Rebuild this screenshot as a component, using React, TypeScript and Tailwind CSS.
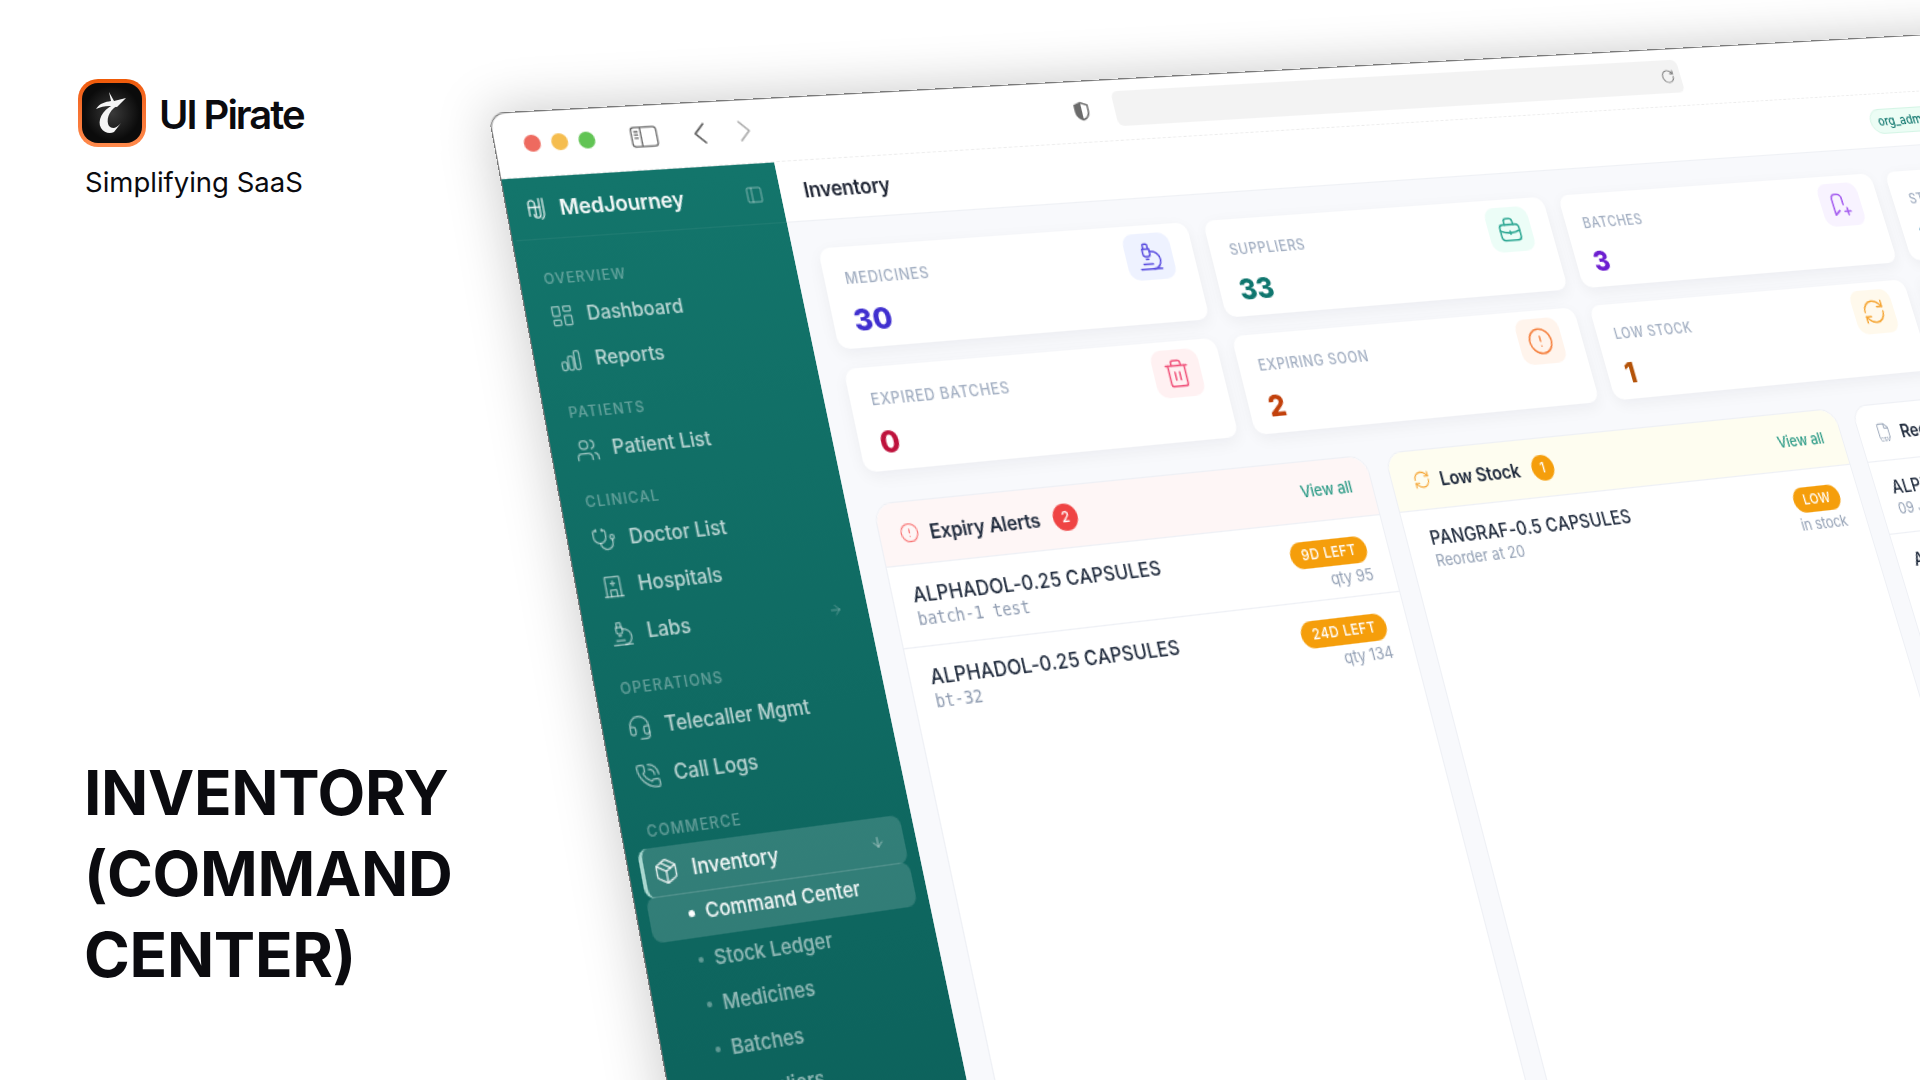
import React from 'react'
import {
	ArrowDown,
	ArrowRight,
	ChevronLeft,
	ChevronRight,
	CircleAlert,
	File,
	Headset,
	LayoutDashboard,
	Microscope,
	Package,
	PanelLeft,
	PhoneCall,
	RefreshCw,
	RotateCw,
	Stethoscope,
	Trash2,
	Users,
} from 'lucide-react'

type IconProps = { className?: string; strokeWidth?: number }

function MedLogo({ className }: IconProps) {
	return (
		<svg viewBox="0 0 24 26" fill="none" stroke="currentColor" strokeWidth="1.7" strokeLinecap="round" className={className}>
			<path d="M4 20V7a3.5 3.5 0 0 1 7 0v13" />
			<path d="M4 11h12" />
			<path d="M16 2v17a3.5 3.5 0 0 1-7 0" />
			<path d="M20 2v17a6 6 0 0 1-3 5" />
		</svg>
	)
}

function BarsIcon({ className }: IconProps) {
	return (
		<svg viewBox="0 0 24 24" fill="none" stroke="currentColor" strokeWidth="1.5" className={className}>
			<rect x="3" y="13" width="5" height="8" rx="2" />
			<rect x="9.5" y="8" width="5" height="13" rx="2" />
			<rect x="16" y="3" width="5" height="18" rx="2" />
		</svg>
	)
}

function BuildingIcon({ className }: IconProps) {
	return (
		<svg viewBox="0 0 24 24" fill="none" stroke="currentColor" strokeWidth="1.5" strokeLinecap="round" className={className}>
			<path d="M5 21V4a1 1 0 0 1 1-1h12a1 1 0 0 1 1 1v17" />
			<path d="M3 21h18" />
			<path d="M12 7v4M10 9h4" />
			<path d="M9 21v-5a1 1 0 0 1 1-1h4a1 1 0 0 1 1 1v5" />
		</svg>
	)
}

function BagIcon({ className }: IconProps) {
	return (
		<svg viewBox="0 0 24 24" fill="none" stroke="currentColor" strokeWidth="1.5" strokeLinecap="round" className={className}>
			<rect x="3" y="8" width="18" height="13" rx="3" />
			<path d="M8 8V5.5A2.5 2.5 0 0 1 10.5 3h3A2.5 2.5 0 0 1 16 5.5V8" />
			<path d="M3 13c5 2.500 13 2.500 18 0" />
			<path d="M12 13.500v2.500" />
		</svg>
	)
}

function BatchIcon({ className }: IconProps) {
	return (
		<svg viewBox="0 0 24 24" fill="none" stroke="currentColor" strokeWidth="1.6" strokeLinecap="round" strokeLinejoin="round" className={className}>
			<path d="M14 12V6.500A4 4 0 0 0 10 3H8a4 4 0 0 0-4 3.500V20.500l5-3.500" />
			<path d="M17 15v6M14 18h6" />
		</svg>
	)
}

function ShieldIcon({ className }: IconProps) {
	return (
		<svg viewBox="0 0 24 24" className={className}>
			<path d="M12 2 4 5v7c0 5 3.500 8.500 8 10 4.500-1.500 8-5 8-10V5z" fill="none" stroke="#6b6b6b" strokeWidth="2" />
			<path d="M12 2 4 5v7c0 5 3.500 8.500 8 10z" fill="#6b6b6b" />
		</svg>
	)
}

function SidebarToggle({ className }: IconProps) {
	return (
		<svg viewBox="0 0 26 20" fill="none" stroke="#666" strokeWidth="1.4" className={className}>
			<rect x="1" y="1" width="24" height="18" rx="3" />
			<path d="M10 1v18" />
			<path d="M3.500 5h4M3.500 8h4M3.500 11h4" />
		</svg>
	)
}

function BrandMark() {
	return (
		<div className="flex h-[68px] w-[68px] items-center justify-center rounded-[20px] bg-linear-to-b from-[#ef5a06] to-[#ff8a4c] p-[4px]">
			<div className="h-full w-full rounded-[16px] bg-[radial-gradient(circle,#3a3a3a_0%,#0b0b0b_65%)]">
				<svg viewBox="0 0 60 60" className="h-full w-full">
					<path d="M27 9 L32 18 L44 15 L35 24 C27 22 21 23 14 26 C18 20 23 19 29 18 Z" fill="#f5f5f5" />
					<path d="M31 22 C20 27 15 38 19 45 C22 50 28 51 32 49 L39 40 C34 46 30 46 27 43 C24 38 26 28 35 23 Z" fill="#f5f5f5" />
				</svg>
			</div>
		</div>
	)
}

const navSections: {
	label: string
	items: { label: string; icon: React.ComponentType<IconProps>; arrow?: boolean }[]
}[] = [
	{
		label: 'Overview',
		items: [
			{ label: 'Dashboard', icon: LayoutDashboard },
			{ label: 'Reports', icon: BarsIcon },
		],
	},
	{ label: 'Patients', items: [{ label: 'Patient List', icon: Users }] },
	{
		label: 'Clinical',
		items: [
			{ label: 'Doctor List', icon: Stethoscope },
			{ label: 'Hospitals', icon: BuildingIcon },
			{ label: 'Labs', icon: Microscope, arrow: true },
		],
	},
	{
		label: 'Operations',
		items: [
			{ label: 'Telecaller Mgmt', icon: Headset },
			{ label: 'Call Logs', icon: PhoneCall },
		],
	},
]

const inventorySubItems = ['Stock Ledger', 'Medicines', 'Batches', 'Suppliers']

function SectionLabel({ children }: { children: React.ReactNode }) {
	return (
		<div className="mb-[5px] h-[15px] pt-[1px] pl-[11px] text-[11.5px] leading-[14px] font-medium tracking-[0.09em] text-white/35 uppercase">
			{children}
		</div>
	)
}

function Sidebar() {
	return (
		<aside className="flex w-[232.5px] shrink-0 flex-col bg-linear-to-b from-[#13756b] to-[#0a5b56] pl-[2.5px] text-white">
			<div className="flex h-[51px] items-center border-b border-white/5 pt-[2px] pr-[15px] pl-[12px]">
				<MedLogo className="h-[20px] w-[18px] text-white/85" />
				<span className="ml-[11px] text-[17.5px] font-semibold tracking-[-0.01em] text-white/95">MedJourney</span>
				<PanelLeft className="ml-auto h-[16px] w-[16px] text-white/45" strokeWidth={1.5} />
			</div>
			<nav className="flex flex-col gap-[14.5px] pt-[24px] pr-[10px] pl-[6px]">
				{navSections.map((section) => (
					<div key={section.label}>
						<SectionLabel>{section.label}</SectionLabel>
						{section.items.map((item) => (
							<div key={item.label} className="flex h-[36px] items-center gap-[11px] pr-[11px] pl-[10px] text-[15.5px] font-medium text-white/70">
								<item.icon className="h-[20px] w-[20px] text-white/55" strokeWidth={1.5} />
								{item.label}
								{item.arrow && <ArrowRight className="ml-auto h-[12px] w-[12px] text-white/30" />}
							</div>
						))}
					</div>
				))}
				<div>
					<SectionLabel>Commerce</SectionLabel>
					<div className="flex h-[36px] items-center gap-[11px] rounded-[8px] border-l-[3px] border-[#a9d8d0] bg-white/15 pr-[16px] pl-[7px] text-[15.5px] font-medium text-white/95">
						<Package className="h-[20px] w-[20px] text-white/85" strokeWidth={1.5} />
						Inventory
						<ArrowDown className="ml-auto h-[12px] w-[12px] text-white/50" />
					</div>
					<div className="mt-[-1px] flex h-[33px] items-center gap-[9px] rounded-[8px] bg-white/15 pb-[3px] pl-[31px] text-[15px] font-medium text-white/95">
						<span className="h-[5px] w-[5px] rounded-full bg-white" />
						Command Center
					</div>
					{inventorySubItems.map((label) => (
						<div key={label} className="flex h-[32px] items-center gap-[9px] pl-[32px] text-[15px] font-medium text-white/55">
							<span className="h-[4px] w-[4px] rounded-full bg-white/35" />
							{label}
						</div>
					))}
				</div>
			</nav>
		</aside>
	)
}

const statCards = [
	{ label: 'Medicines', value: '30', valueColor: 'text-[#4030cf]', tile: 'bg-[#eef2ff] text-[#5b4fe0]', icon: Microscope },
	{ label: 'Suppliers', value: '33', valueColor: 'text-[#0f766e]', tile: 'bg-[#ecfdf7] text-[#2fa894]', icon: BagIcon },
	{ label: 'Batches', value: '3', valueColor: 'text-[#6d1fd0]', tile: 'bg-[#f8f3ff] text-[#a35bef]', icon: BatchIcon },
	{ label: 'Stock Value', value: '12', valueColor: 'text-[#0369a1]', tile: 'bg-[#f0f9ff] text-[#38a3d8]', icon: Package },
	{ label: 'Expired Batches', value: '0', valueColor: 'text-[#be123c]', tile: 'bg-[#fff1f2] text-[#f0527a]', icon: Trash2 },
	{ label: 'Expiring Soon', value: '2', valueColor: 'text-[#c2410c]', tile: 'bg-[#fff4ec] text-[#f5803e]', icon: CircleAlert },
	{ label: 'Low Stock', value: '1', valueColor: 'text-[#b45309]', tile: 'bg-[#fff9ec] text-[#f5a431]', icon: RefreshCw },
	{ label: 'Total Stock', value: '229', valueColor: 'text-[#0f766e]', tile: 'bg-[#ecfdf7] text-[#2fa894]', icon: Package },
]

function StatCard({ card }: { card: (typeof statCards)[number] }) {
	return (
		<div className="flex h-[84px] justify-between rounded-[10px] bg-white pt-[7px] pr-[20px] pl-[18px] shadow-[0_4px_14px_rgba(15,23,42,0.05)]">
			<div className="pt-[12px]">
				<div className="text-[12.5px] leading-[16px] font-medium tracking-[0.05em] text-[#a3afc2] uppercase">{card.label}</div>
				<div className={`mt-[12px] text-[25px] leading-[28px] font-extrabold ${card.valueColor}`}>{card.value}</div>
			</div>
			<div className={`flex h-[40px] w-[44px] items-center justify-center rounded-[10px] ${card.tile}`}>
				<card.icon className="h-[26px] w-[26px]" strokeWidth={1.4} />
			</div>
		</div>
	)
}

type Row = { name: string; sub: string; mono?: boolean; badge?: string; note: string }

function Panel({
	title,
	icon,
	count,
	countColor,
	headerColor,
	headerInset = 'pl-[17px]',
	rowInset = 'pl-[17px]',
	rows,
}: {
	title: string
	icon: React.ReactNode
	count?: string
	countColor?: string
	headerColor: string
	headerInset?: string
	rowInset?: string
	rows: Row[]
}) {
	return (
		<section className="flex flex-col rounded-t-[16px] border border-[#eef0f5] bg-white">
			<div className={`flex h-[50px] items-center rounded-t-[16px] border-b border-[#eef0f5] pr-[19px] ${headerInset} ${headerColor}`}>
				{icon}
				<span className="ml-[9px] text-[16px] font-semibold tracking-[-0.01em] text-[#1e293b]">{title}</span>
				{count && (
					<span className={`ml-[12px] flex h-[22px] w-[22px] items-center justify-center rounded-full text-[12px] font-medium text-white ${countColor}`}>
						{count}
					</span>
				)}
				<span className="ml-auto text-[13.5px] font-medium tracking-[-0.01em] text-[#2f9c88]">View all</span>
			</div>
			{rows.map((row, i) => (
				<div key={i} className={`flex h-[64px] justify-between border-b border-[#eef0f5] pr-[20px] last:border-b-0 ${rowInset}`}>
					<div className="pt-[13px]">
						<div className="text-[16px] leading-[20px] font-medium tracking-[0.01em] text-[#1e293b]">{row.name}</div>
						{row.mono ? (
							<div className="[font-family:'DejaVu_Sans_Mono',monospace] text-[13.5px] leading-[19px] text-[#8e9bb0]">{row.sub}</div>
						) : (
							<div className="text-[13.5px] leading-[19px] text-[#94a1b5]">{row.sub}</div>
						)}
					</div>
					<div className="flex flex-col items-end pt-[15px]">
						{row.badge && (
							<span className="flex h-[22px] items-center rounded-full bg-[#f59e0b] px-[10px] text-[12px] font-medium tracking-[0.04em] text-white">
								{row.badge}
							</span>
						)}
						<span className="mt-[1px] text-[13.5px] leading-[18px] tracking-[-0.01em] text-[#94a1b5]">{row.note}</span>
					</div>
				</div>
			))}
		</section>
	)
}

function CsvFileIcon() {
	return (
		<div className="flex flex-col items-center leading-none text-[#94a1b5]">
			<File className="h-[16px] w-[18px]" strokeWidth={1.4} />
			<span className="mt-[-3px] bg-white text-[5px] font-semibold">CSV</span>
		</div>
	)
}

function BrowserWindow() {
	return (
		<div className="absolute top-0 left-[-2.5px] flex h-[1100px] w-[1677.5px] origin-top-left [transform:matrix3d(1.2617,-0.0515,0,0.000126,0.1662,1.1873,0,-0.00011175,0,0,1,0,490,113,0,1)] flex-col overflow-hidden rounded-t-[14px] border-t-[1.5px] border-l-[1.5px] border-[#7a7a7a] bg-white">
			<header className="flex h-[54px] shrink-0 items-center border-b border-dashed border-[#ececec] pb-[2px] pl-[24px]">
				<span className="h-[14px] w-[14px] rounded-full bg-[#ee6a5f]" />
				<span className="ml-[9px] h-[14px] w-[14px] rounded-full bg-[#f5bd4f]" />
				<span className="ml-[9px] h-[14px] w-[14px] rounded-full bg-[#61c454]" />
				<SidebarToggle className="ml-[30px] h-[18px] w-[24px]" />
				<ChevronLeft className="ml-[20px] h-[32px] w-[32px] text-[#555]" strokeWidth={1.2} />
				<ChevronRight className="ml-[7px] h-[32px] w-[32px] text-[#aaa]" strokeWidth={1.2} />
				<ShieldIcon className="ml-[282px] h-[20px] w-[18px]" />
				<div className="ml-[22px] flex h-[31px] w-[575px] items-center justify-end rounded-[6px] bg-[#f3f3f3] pr-[6px]">
					<RotateCw className="h-[15px] w-[15px] text-[#666]" strokeWidth={1.5} />
				</div>
			</header>
			<div className="flex min-h-0 flex-1">
				<Sidebar />
				<main className="flex min-w-0 flex-1 flex-col bg-[#f8f9fc]">
					<div className="flex h-[51px] shrink-0 items-center justify-between border-b border-[#eff1f5] bg-white pt-[2px] pr-[282px] pl-[21px]">
						<h1 className="text-[17px] font-semibold tracking-[-0.01em] text-[#1e2433]">Inventory</h1>
						<span className="flex h-[24px] items-center rounded-full border border-[#d5f5e6] bg-[#ecfdf5] px-[8px] text-[12px] font-medium text-[#0f766e]">org_admin</span>
					</div>
					<div className="flex min-h-0 flex-1 flex-col pt-[23px] pr-[24px] pl-[22.5px]">
						<div className="grid grid-cols-4 gap-4">
							{statCards.map((card) => (
								<StatCard key={card.label} card={card} />
							))}
						</div>
						<div className="mt-[25px] grid flex-1 grid-cols-[450px_460px_1fr] gap-[18px]">
							<Panel
								title="Expiry Alerts"
								icon={<CircleAlert className="h-[17px] w-[17px] text-[#f87171]" strokeWidth={1.5} />}
								count="2"
								countColor="bg-[#ef4444]"
								headerColor="bg-[#fef6f6]"
								rows={[
									{ name: 'ALPHADOL-0.25 CAPSULES', sub: 'batch-1 test', mono: true, badge: '9D LEFT', note: 'qty 95' },
									{ name: 'ALPHADOL-0.25 CAPSULES', sub: 'bt-32', mono: true, badge: '24D LEFT', note: 'qty 134' },
								]}
							/>
							<Panel
								title="Low Stock"
								icon={<RefreshCw className="h-[17px] w-[17px] text-[#f5a431]" strokeWidth={1.5} />}
								count="1"
								countColor="bg-[#f59e0b]"
								headerColor="bg-[#fefdf0]"
								headerInset="pl-[20px]"
								rowInset="pl-[22px]"
								rows={[{ name: 'PANGRAF-0.5 CAPSULES', sub: 'Reorder at 20', badge: 'LOW', note: 'in stock' }]}
							/>
							<Panel
								title="Recent Imports"
								icon={<CsvFileIcon />}
								headerColor="bg-white"
								rows={[
									{ name: 'ALPHADOL-0.25 CAPSULES', sub: '09 Jan 2026', note: 'qty 95' },
									{ name: 'ALPHADOL-0.25 CAPSULES', sub: '09 Jan 2026', note: 'qty 134' },
								]}
							/>
						</div>
					</div>
				</main>
			</div>
		</div>
	)
}

export default function App() {
	return (
		<div className="relative flex h-[1080px] w-[1920px] overflow-hidden bg-white [font-family:Inter,sans-serif]">
			<div className="flex w-[480px] shrink-0 flex-col justify-between pt-[79px] pb-[85px] pl-[78px]">
				<div>
					<div className="flex items-center gap-[13px]">
						<BrandMark />
						<span className="pt-[4px] text-[40px] leading-none font-semibold tracking-[-0.05em] text-[#0b0b0f]">UI Pirate</span>
					</div>
					<p className="mt-[19px] ml-[7px] text-[27.5px] leading-[32px] text-[#0b0b0f]">Simplifying SaaS</p>
				</div>
				<h2 className="ml-[6px] text-[62px] leading-[81px] font-bold tracking-[-0.005em] text-[#0b0b0f]">
					INVENTORY
					<br />
					(COMMAND
					<br />
					CENTER)
				</h2>
			</div>
			<div className="pointer-events-none absolute top-0 left-0 h-[1080px] w-[1920px] overflow-hidden">
				<div className="absolute top-0 left-[-2.5px] h-[1100px] w-[1677.5px] origin-top-left [transform:matrix3d(1.2617,-0.0515,0,0.000126,0.1662,1.1873,0,-0.00011175,0,0,1,0,490,113,0,1)] rounded-t-[14px] shadow-[0_0_45px_rgba(0,0,0,0.22)]" />
				<BrowserWindow />
			</div>
		</div>
	)
}
